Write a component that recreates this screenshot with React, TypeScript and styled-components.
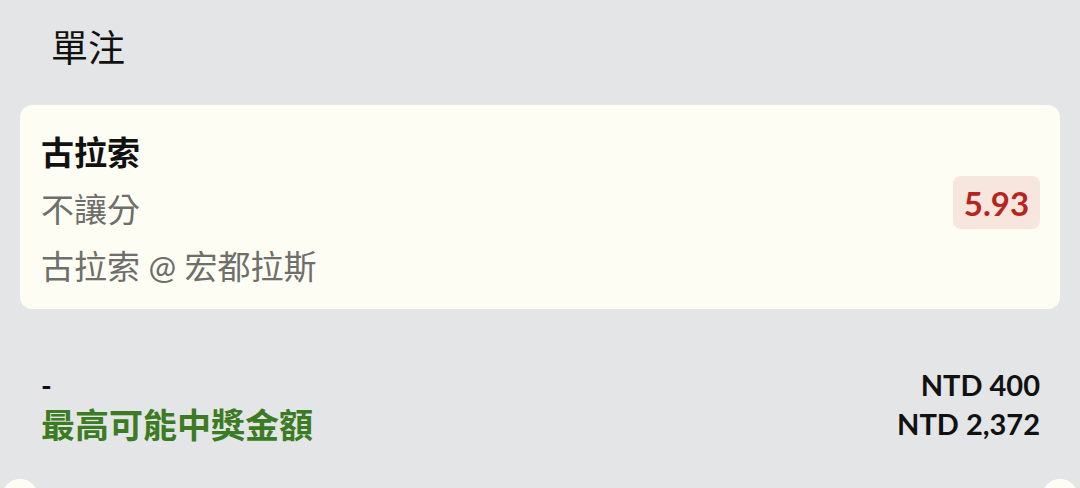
import React from "react";
import styled, { createGlobalStyle } from "styled-components";

const GlobalStyle = createGlobalStyle`
  html, body {
    margin: 0;
    padding: 0;
    background: #e4e5e7;
  }
  body {
    font-family: Lato, "Noto Sans CJK TC", "Noto Sans", sans-serif;
    overflow: hidden;
  }
`;

const Page = styled.div`
  width: 1080px;
  height: 488px;
  display: flex;
  flex-direction: column;
  background: #e4e5e7;
  overflow: hidden;
  & > * {
    flex-shrink: 0;
  }
`;

const Header = styled.div`
  height: 105px;
  display: flex;
  align-items: flex-start;
  padding-left: 51px;
  box-sizing: border-box;
`;

const Title = styled.h1`
  margin: 0;
  font-family: "Noto Sans CJK TC", sans-serif;
  font-size: 37px;
  font-weight: 400;
  line-height: 92px;
  color: #111;
`;

const Card = styled.div`
  margin: 0 20px;
  height: 204px;
  box-sizing: border-box;
  background: #fdfdf4;
  border-radius: 12px;
  padding: 19px 20px 0 21px;
  display: flex;
  justify-content: space-between;
  align-items: center;
`;

const Lines = styled.div`
  display: flex;
  flex-direction: column;
  align-self: flex-start;
`;

const Line = styled.div<{ $strong?: boolean }>`
  font-family: Lato, "Noto Sans CJK TC", sans-serif;
  font-size: 33px;
  line-height: 57px;
  height: 57px;
  font-weight: ${(p) => (p.$strong ? 700 : 400)};
  color: ${(p) => (p.$strong ? "#111" : "#6e6e6a")};
  white-space: nowrap;
`;

const OddsBadge = styled.div`
  width: 87px;
  height: 53px;
  margin-bottom: 28px;
  border-radius: 8px;
  background: #f6e6de;
  color: #b8241f;
  font-family: Lato, sans-serif;
  font-size: 33px;
  font-weight: 700;
  display: flex;
  align-items: center;
  justify-content: center;
`;

const Summary = styled.div`
  margin-top: 55px;
  padding: 0 40px 0 41px;
  display: flex;
  flex-direction: column;
`;

const SummaryRow = styled.div<{ $height: number }>`
  display: flex;
  justify-content: space-between;
  align-items: center;
  height: ${(p) => p.$height}px;
`;

const Label = styled.span<{ $accent?: boolean }>`
  font-family: Lato, "Noto Sans CJK TC", sans-serif;
  font-size: ${(p) => (p.$accent ? 34 : 29)}px;
  font-weight: 700;
  color: ${(p) => (p.$accent ? "#3b7b23" : "#111")};
`;

const Amount = styled.span`
  font-family: Lato, sans-serif;
  font-size: 29px;
  font-weight: 700;
  color: #111;
`;

const Footer = styled.div`
  margin-top: 36px;
  padding: 0 2px 0 2px;
  display: flex;
  justify-content: space-between;
`;

const Notch = styled.div`
  width: 36px;
  height: 36px;
  border-radius: 50%;
  background: #fdfdf4;
`;

export default function App() {
  return (
    <Page>
      <GlobalStyle />
      <Header>
        <Title>單注</Title>
      </Header>
      <Card>
        <Lines>
          <Line $strong>古拉索</Line>
          <Line>不讓分</Line>
          <Line>古拉索 @ 宏都拉斯</Line>
        </Lines>
        <OddsBadge>5.93</OddsBadge>
      </Card>
      <Summary>
        <SummaryRow $height={40}>
          <Label>-</Label>
          <Amount>NTD 400</Amount>
        </SummaryRow>
        <SummaryRow $height={39}>
          <Label $accent>最高可能中獎金額</Label>
          <Amount>NTD 2,372</Amount>
        </SummaryRow>
      </Summary>
      <Footer>
        <Notch />
        <Notch />
      </Footer>
    </Page>
  );
}
